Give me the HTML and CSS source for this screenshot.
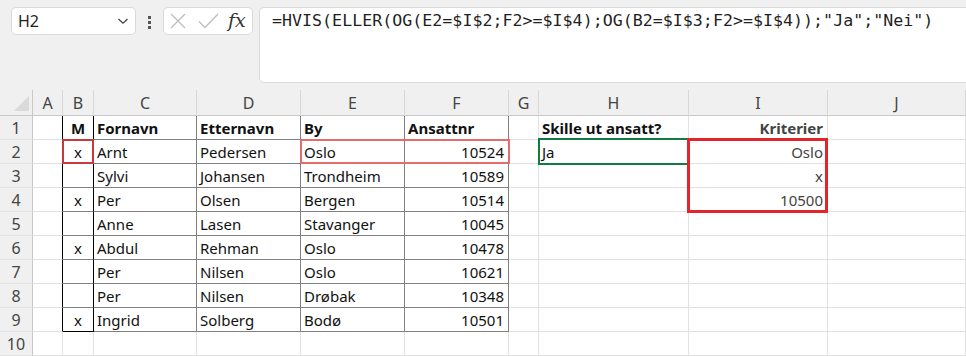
FILE: index.html
```html
<!DOCTYPE html>
<html lang="no">
<head>
<meta charset="utf-8">
<title>Excel</title>
<link rel="stylesheet" href="styles.css">
</head>
<body>
<div class="app">
  <div class="fbar">
    <div class="namebox">
      <span class="nb-text">H2</span>
      <svg class="chev" width="12" height="8" viewBox="0 0 12 8"><path d="M1.5 2 L6 6.2 L10.5 2" fill="none" stroke="#444" stroke-width="1.3"/></svg>
    </div>
    <div class="dots"><i></i><i></i><i></i></div>
    <div class="fxbox">
      <svg class="ico-x" width="16" height="16" viewBox="0 0 16 16"><path d="M1 1 L15 15 M15 1 L1 15" stroke="#bdbdbd" stroke-width="1.3" fill="none"/></svg>
      <svg class="ico-ok" width="21" height="16" viewBox="0 0 21 16"><path d="M1 8.5 L7 14.5 L20 1" stroke="#bdbdbd" stroke-width="1.3" fill="none"/></svg>
      <span class="fx">fx</span>
    </div>
    <div class="formula">=HVIS(ELLER(OG(E2=$I$2;F2&gt;=$I$4);OG(B2=$I$3;F2&gt;=$I$4));"Ja";"Nei")</div>
  </div>

  <div class="sheet">
    <div class="corner"><span class="tri"></span></div>
    <div class="ch">A</div><div class="ch">B</div><div class="ch">C</div><div class="ch">D</div><div class="ch">E</div><div class="ch">F</div><div class="ch">G</div><div class="ch">H</div><div class="ch">I</div><div class="ch">J</div>

    <div class="rh">1</div>
    <div class="c ta"></div><div class="c tb ctr b">M</div><div class="c t b">Fornavn</div><div class="c t b">Etternavn</div><div class="c t b">By</div><div class="c t b">Ansattnr</div><div class="c"></div><div class="c b">Skille ut ansatt?</div><div class="c r b g">Kriterier</div><div class="c"></div>

    <div class="rh">2</div>
    <div class="c ta"></div><div class="c tb ctr host">x<span class="hl hl-b2"></span></div><div class="c t">Arnt</div><div class="c t">Pedersen</div><div class="c t host">Oslo<span class="hl hl-e2"></span></div><div class="c t r">10524</div><div class="c"></div><div class="c host">Ja<span class="hl hl-h2"></span></div><div class="c r g host">Oslo<span class="hl hl-i2"></span></div><div class="c"></div>

    <div class="rh">3</div>
    <div class="c ta"></div><div class="c tb ctr"></div><div class="c t">Sylvi</div><div class="c t">Johansen</div><div class="c t">Trondheim</div><div class="c t r">10589</div><div class="c"></div><div class="c"></div><div class="c r g">x</div><div class="c"></div>

    <div class="rh">4</div>
    <div class="c ta"></div><div class="c tb ctr">x</div><div class="c t">Per</div><div class="c t">Olsen</div><div class="c t">Bergen</div><div class="c t r">10514</div><div class="c"></div><div class="c"></div><div class="c r g">10500</div><div class="c"></div>

    <div class="rh">5</div>
    <div class="c ta"></div><div class="c tb ctr"></div><div class="c t">Anne</div><div class="c t">Lasen</div><div class="c t">Stavanger</div><div class="c t r">10045</div><div class="c"></div><div class="c"></div><div class="c"></div><div class="c"></div>

    <div class="rh">6</div>
    <div class="c ta"></div><div class="c tb ctr">x</div><div class="c t">Abdul</div><div class="c t">Rehman</div><div class="c t">Oslo</div><div class="c t r">10478</div><div class="c"></div><div class="c"></div><div class="c"></div><div class="c"></div>

    <div class="rh">7</div>
    <div class="c ta"></div><div class="c tb ctr"></div><div class="c t">Per</div><div class="c t">Nilsen</div><div class="c t">Oslo</div><div class="c t r">10621</div><div class="c"></div><div class="c"></div><div class="c"></div><div class="c"></div>

    <div class="rh">8</div>
    <div class="c ta"></div><div class="c tb ctr"></div><div class="c t">Per</div><div class="c t">Nilsen</div><div class="c t">Drøbak</div><div class="c t r">10348</div><div class="c"></div><div class="c"></div><div class="c"></div><div class="c"></div>

    <div class="rh">9</div>
    <div class="c ta"></div><div class="c tb tbl ctr">x</div><div class="c t">Ingrid</div><div class="c t">Solberg</div><div class="c t">Bodø</div><div class="c t r">10501</div><div class="c"></div><div class="c"></div><div class="c"></div><div class="c"></div>

    <div class="rh">10</div>
    <div class="c"></div><div class="c"></div><div class="c"></div><div class="c"></div><div class="c"></div><div class="c"></div><div class="c"></div><div class="c"></div><div class="c"></div><div class="c"></div>
  </div>
</div>
</body>
</html>
```

FILE: styles.css
```css
html, body {
  margin: 0;
  padding: 0;
  background: #f0f0f0;
  overflow: hidden;
}
.app {
  width: 966px;
  height: 356px;
  overflow: hidden;
  font-family: "Noto Sans", "Liberation Sans", sans-serif;
}
.fbar {
  display: flex;
  align-items: flex-start;
  height: 90px;
  padding: 7px 0 0 11px;
  box-sizing: border-box;
}
.namebox {
  flex: 0 0 125px;
  height: 28px;
  box-sizing: border-box;
  border: 1px solid #d9d9d9;
  border-radius: 5px;
  background: #fff;
  display: flex;
  align-items: center;
  padding-left: 6px;
}
.nb-text {
  font-size: 16px;
  color: #1f1f1f;
}
.chev {
  margin-left: auto;
  margin-right: 6px;
}
.dots {
  flex: 0 0 27px;
  display: flex;
  flex-direction: column;
  align-items: center;
  gap: 2px;
  padding-top: 9px;
}
.dots i {
  display: block;
  width: 3px;
  height: 3px;
  background: #555;
}
.fxbox {
  flex: 0 0 90px;
  height: 28px;
  box-sizing: border-box;
  border: 1px solid #d9d9d9;
  border-radius: 5px;
  background: #fff;
  display: flex;
  align-items: center;
  padding-left: 6px;
}
.ico-ok {
  margin-left: 12px;
}
.fx {
  margin-left: 9px;
  font-family: "DejaVu Serif", "Liberation Serif", serif;
  font-style: italic;
  font-size: 19px;
  color: #333;
  line-height: 20px;
  margin-top: -3px;
}
.formula {
  flex: 0 0 720px;
  margin-left: 6px;
  height: 76px;
  box-sizing: border-box;
  border: 1px solid #d9d9d9;
  border-radius: 5px;
  background: #fff;
  padding: 2px 0 0 12px;
  font-family: "DejaVu Sans Mono", "Liberation Mono", monospace;
  font-size: 16.6px;
  letter-spacing: 0.03px;
  line-height: 22px;
  color: #1f1f1f;
  white-space: nowrap;
}
.sheet {
  display: grid;
  grid-template-columns: 33px 30px 31px 103px 104px 104px 104px 30px 150px 139px 138px;
  grid-template-rows: 26px repeat(10, 24px);
}
.corner {
  box-sizing: border-box;
  border-right: 1px solid #c8c8c8;
  border-bottom: 1px solid #c8c8c8;
  display: flex;
  justify-content: flex-end;
  align-items: flex-end;
  padding: 0 3px 4px 0;
}
.tri {
  width: 15px;
  height: 15px;
  background: #dadada;
  clip-path: polygon(100% 0, 100% 100%, 0 100%);
}
.ch {
  box-sizing: border-box;
  border-right: 1px solid #d8d8d8;
  border-bottom: 1px solid #c8c8c8;
  display: flex;
  align-items: center;
  justify-content: center;
  font-size: 16px;
  color: #444;
  padding-top: 1px;
}
.rh {
  box-sizing: border-box;
  border-right: 1px solid #c8c8c8;
  border-bottom: 1px solid #e2e2e2;
  display: flex;
  align-items: center;
  justify-content: center;
  font-size: 16px;
  color: #444;
}
.c {
  box-sizing: border-box;
  background: #fff;
  border-right: 1px solid #e1e1e1;
  border-bottom: 1px solid #e1e1e1;
  display: flex;
  align-items: center;
  padding: 0 3px 0 3px;
  font-size: 15px;
  line-height: 24px;
  color: #111;
  white-space: nowrap;
}
.c.r {
  justify-content: flex-end;
  padding-right: 4px;
}
.c.ctr {
  justify-content: center;
}
.c.b {
  font-weight: 700;
}
.c.g {
  color: #444;
}
.c.t {
  border-right-color: #808080;
  border-bottom-color: #808080;
}
.c.ta {
  border-right-color: #000;
}
.c.tb {
  border-right-color: #000;
  border-bottom-color: #808080;
}
.c.tbl {
  border-bottom-color: #000;
}
.host {
  position: relative;
}
.hl {
  position: absolute;
  box-sizing: border-box;
  z-index: 2;
  pointer-events: none;
}
.hl-b2 {
  left: -1px;
  top: -1px;
  width: 32px;
  height: 25px;
  border: 2px solid #c63a3d;
}
.hl-e2 {
  left: -1px;
  top: -1px;
  width: 210px;
  height: 25px;
  border: 2px solid #e56b6d;
}
.hl-h2 {
  left: -1px;
  top: -2px;
  width: 151px;
  height: 27px;
  border: 2px solid #107c41;
}
.hl-i2 {
  left: -2px;
  top: -2px;
  width: 141px;
  height: 75px;
  border: 3px solid #e3242b;
  z-index: 3;
}
```
